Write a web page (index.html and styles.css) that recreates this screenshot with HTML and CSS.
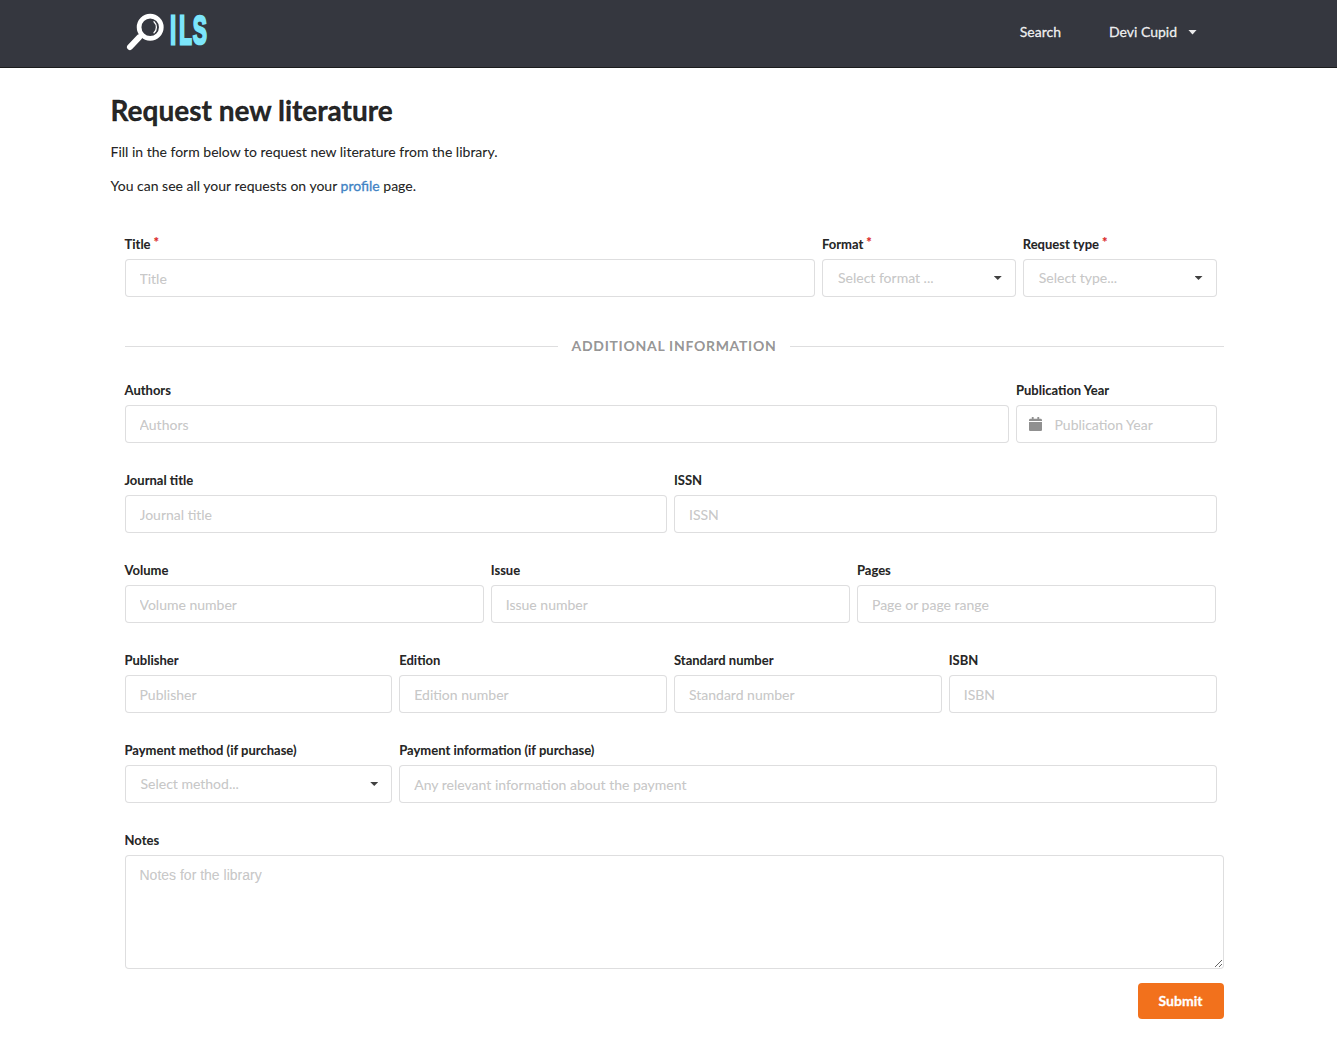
FILE: index.html
```html
<!DOCTYPE html>
<html lang="en">
<head>
<meta charset="utf-8">
<title>Request new literature</title>
<link rel="stylesheet" href="styles.css">
</head>
<body>
<header class="header">
  <a class="logo" aria-label="ILS">
    <svg width="92" height="64" viewBox="0 -11 92 64">
      <path d="M15 26.5 6 36" stroke="#fff" stroke-width="6" stroke-linecap="round"/>
      <path d="M18.5 23.5 13 29" stroke="#fff" stroke-width="3"/>
      <circle cx="26.2" cy="16.3" r="11.1" fill="none" stroke="#fff" stroke-width="4.7"/>
      <path d="M30 10.8a7.5 7.5 0 0 1 0 11" fill="none" stroke="#fff" stroke-width="1.3" stroke-linecap="round"/>
      <text class="logo-letters" transform="translate(46 33.2) scale(.5 1)"><tspan class="stem" x=".6">I</tspan><tspan class="stem" x="18.4">L</tspan></text>
      <text class="logo-letters" transform="translate(68.8 33.2) scale(.52 1)">S</text>
    </svg>
  </a>
  <nav class="nav">
    <a>Search</a>
    <a class="user">Devi Cupid <i class="caret"></i></a>
  </nav>
</header>
<main class="page">
  <h1>Request new literature</h1>
  <p>Fill in the form below to request new literature from the library.</p>
  <p>You can see all your requests on your <a class="link">profile</a> page.</p>
  <form class="form">
    <div class="fields main-fields">
      <div class="field"><label>Title<span class="star">*</span></label><input placeholder="Title"></div>
      <div class="field"><label>Format<span class="star">*</span></label><div class="select"><span>Select format ...</span><i class="caret"></i></div></div>
      <div class="field"><label>Request type<span class="star">*</span></label><div class="select"><span>Select type...</span><i class="caret"></i></div></div>
    </div>
    <div class="divider">Additional information</div>
    <div class="fields author-fields">
      <div class="field"><label>Authors</label><input placeholder="Authors"></div>
      <div class="field"><label>Publication Year</label>
        <div class="icon-input">
          <svg width="13" height="14" viewBox="0 0 448 512" preserveAspectRatio="none"><path d="M12 180h424c7 0 12 5 12 12v272c0 27-21 48-48 48H48c-27 0-48-21-48-48V192c0-7 5-12 12-12zM448 148v-36c0-27-21-48-48-48h-48V12c0-7-5-12-12-12h-40c-7 0-12 5-12 12v52H160V12c0-7-5-12-12-12h-40c-7 0-12 5-12 12v52H48c-27 0-48 21-48 48v36z"/></svg>
          <input placeholder="Publication Year">
        </div>
      </div>
    </div>
    <div class="fields two">
      <div class="field"><label>Journal title</label><input placeholder="Journal title"></div>
      <div class="field"><label>ISSN</label><input placeholder="ISSN"></div>
    </div>
    <div class="fields three">
      <div class="field"><label>Volume</label><input placeholder="Volume number"></div>
      <div class="field"><label>Issue</label><input placeholder="Issue number"></div>
      <div class="field"><label>Pages</label><input placeholder="Page or page range"></div>
    </div>
    <div class="fields four">
      <div class="field"><label>Publisher</label><input placeholder="Publisher"></div>
      <div class="field"><label>Edition</label><input placeholder="Edition number"></div>
      <div class="field"><label>Standard number</label><input placeholder="Standard number"></div>
      <div class="field"><label>ISBN</label><input placeholder="ISBN"></div>
    </div>
    <div class="fields payment">
      <div class="field"><label>Payment method (if purchase)</label><div class="select"><span>Select method...</span><i class="caret"></i></div></div>
      <div class="field"><label>Payment information (if purchase)</label><input placeholder="Any relevant information about the payment"></div>
    </div>
    <div class="notes"><label>Notes</label><textarea placeholder="Notes for the library"></textarea></div>
    <div class="actions"><button type="button">Submit</button></div>
  </form>
</main>
</body>
</html>
```
FILE: styles.css
```css
* { box-sizing: border-box; }
body {
  margin: 0;
  background: #fff;
  color: rgba(0, 0, 0, .87);
  font: 14px/20px Lato, "Liberation Sans", sans-serif;
  -webkit-text-stroke: .15px;
}
.header {
  display: flex;
  justify-content: space-between;
  height: 68px;
  padding: 0 140px 0 124px;
  background: #35373f;
  border-bottom: 1px solid #1b1c1d;
}
.logo svg { display: block; }
.logo-letters {
  font: bold 41px "Liberation Sans", Arial, sans-serif;
  fill: #7ce5fb;
  stroke: #7ce5fb;
  stroke-width: 2.4px;
}
.logo-letters .stem { stroke-width: 3px; }
.nav { display: flex; gap: 48px; padding-top: 22px; color: rgba(255, 255, 255, .9); -webkit-text-stroke: .3px; }
.caret {
  display: inline-block;
  width: 8px;
  height: 4px;
  background: currentColor;
  clip-path: polygon(0 0, 100% 0, 50% 100%);
}
.user { display: flex; align-items: center; height: 20px; gap: 11px; }
.user .caret { width: 9px; height: 5px; }
.page { width: 1116px; margin: 0 auto; padding-top: 24px; }
h1 { margin: 0 0 14px; font-size: 28px; line-height: 36px; font-weight: 700; -webkit-text-stroke: .4px; }
p { margin: 0 0 14px; }
.link { color: #4183c4; -webkit-text-stroke: .3px; }
.form { margin: 39px 3px 0 14px; }
.fields { display: grid; margin-bottom: 28px; }
.main-fields { grid-template-columns: 1fr 200.75px 200.75px; margin-bottom: 39px; }
.author-fields { grid-template-columns: 1fr 207.5px; }
.two { grid-template-columns: repeat(2, 1fr); }
.three { grid-template-columns: repeat(3, 33.325%); }
.four { grid-template-columns: repeat(4, 1fr); }
.payment { grid-template-columns: 1fr 3fr; }
.field { min-width: 0; padding-right: 7px; }
label { display: block; height: 18px; margin-bottom: 6px; font-size: 13px; line-height: 18px; font-weight: 700; }
.star { margin-left: 3px; color: #db2828; position: relative; top: -2px; }
.field input, .select {
  display: block;
  width: 100%;
  height: 38px;
  padding: 0 14px;
  border: 1px solid rgba(34, 36, 38, .15);
  border-radius: 4px;
  background: #fff;
  font: 14px/17px Lato, sans-serif;
  -webkit-text-stroke: .15px;
}
.field input::placeholder, textarea::placeholder { color: rgba(191, 191, 191, .87); opacity: 1; }
.field .select {
  display: flex;
  align-items: center;
  justify-content: space-between;
  padding: 0 13px 0 15px;
  color: rgba(191, 191, 191, .87);
}
.select span { padding-bottom: 2px; }
.select .caret { color: #404040; }
.icon-input { display: grid; align-items: center; }
.icon-input > * { grid-area: 1 / 1; }
.icon-input svg { z-index: 1; margin-left: 13px; fill: #909090; }
.field .icon-input input { padding-left: 37.5px; }
.divider {
  display: flex;
  align-items: center;
  gap: 14px;
  margin-bottom: 25px;
  color: rgba(0, 0, 0, .42);
  font-weight: 700;
  line-height: 20px;
  letter-spacing: .7px;
  text-transform: uppercase;
}
.divider::before, .divider::after { content: ""; flex: 1; height: 1px; background: rgba(34, 36, 38, .15); }
textarea {
  display: block;
  width: 100%;
  height: 114px;
  padding: 10px 14px;
  border: 1px solid rgba(34, 36, 38, .15);
  border-radius: 4px;
  resize: vertical;
  font: 14px/18px "Liberation Sans", Arial, sans-serif;
}
.actions { display: flex; justify-content: flex-end; margin-top: 14px; }
button {
  width: 86px;
  height: 36px;
  border: 0;
  border-radius: 4px;
  background: #f2711c;
  color: #fff;
  font: bold 14px/14px Lato, sans-serif;
  -webkit-text-stroke: .3px;
}
```
